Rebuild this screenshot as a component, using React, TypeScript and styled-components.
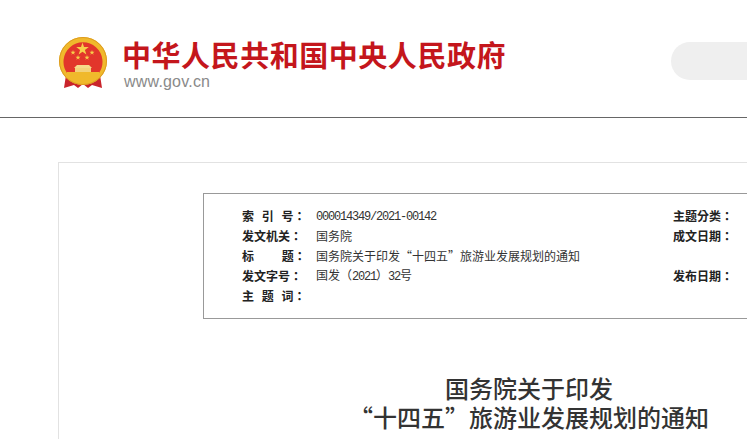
import React from "react";
import styled, { createGlobalStyle } from "styled-components";

const Global = createGlobalStyle`
  html, body { margin: 0; padding: 0; background: #fff; overflow: hidden; }
  body { font-family: "Noto Sans CJK SC", "Liberation Sans", sans-serif; color: #333; }
  #root { width: 747px; height: 439px; overflow: hidden; }
`;

const Page = styled.div`
  width: 747px;
  height: 439px;
  overflow: hidden;
`;

const Header = styled.header`
  height: 118px;
  box-sizing: border-box;
  border-bottom: 1px solid #666;
  margin-bottom: 44px;
  padding: 37px 0 0 58px;
  display: flex;
  justify-content: space-between;
  align-items: flex-start;
`;

const Brand = styled.div`
  display: flex;
  gap: 14px;
`;

const BrandText = styled.div`
  display: flex;
  flex-direction: column;
`;

const SiteName = styled.div`
  font-size: 29px;
  line-height: 35px;
  font-weight: 700;
  letter-spacing: 0.54px;
  color: #c4161c;
  white-space: nowrap;
`;

const SiteUrl = styled.div`
  margin: 1px 0 0 2px;
  font-family: "Liberation Sans", sans-serif;
  font-size: 16px;
  line-height: 18px;
  letter-spacing: 0.2px;
  color: #8a8a8a;
`;

const SearchPill = styled.div`
  width: 76px;
  height: 38px;
  margin-top: 5px;
  flex: none;
  background: #efefef;
  border-radius: 19px 0 0 19px;
`;

const Card = styled.main`
  width: 944px;
  height: 300px;
  margin-left: 58px;
  box-sizing: border-box;
  border: 1px solid #e2e2e2;
  padding: 30px 144px 0;
`;

const InfoBox = styled.section`
  width: 654px;
  height: 126px;
  box-sizing: border-box;
  border: 1px solid #999;
  padding: 12px 0 0 38px;
  display: grid;
  grid-template-columns: 431px 1fr;
  grid-auto-rows: 20px;
`;

const Field = styled.div`
  display: flex;
  align-items: center;
  font-size: 12px;
  line-height: 20px;
  white-space: nowrap;
`;

const Label = styled.span<{ $wide?: boolean }>`
  font-family: "Noto Sans CJK TC", "Noto Sans CJK SC", sans-serif;
  font-weight: 700;
  color: #222;
  white-space: pre;
  word-spacing: ${(p) => (p.$wide ? "25px" : "5px")};
  width: 74px;
  flex: none;
`;

const Value = styled.span`
  color: #333;
`;

const Latin = styled.span`
  font-family: "Liberation Mono", monospace;
  letter-spacing: -1.2px;
`;

const Title = styled.h1`
  margin: 54px 0 0 -1px;
  width: 654px;
  text-align: center;
  font-family: "Noto Sans CJK SC", "Liberation Serif", serif;
  font-size: 24px;
  line-height: 29px;
  font-weight: 500;
  color: #333;
  white-space: nowrap;
`;

const Emblem = () => (
  <svg width="50" height="54" viewBox="0 0 50 54" aria-hidden="true">
    <path d="M8 38 L6 51 L16 48 L20 51 L25 47 L30 51 L34 48 L44 51 L42 38 Z" fill="#c9242b" />
    <circle cx="25" cy="24" r="24" fill="#f0b92c" />
    <circle cx="25" cy="24" r="23.5" fill="none" stroke="#dd9c20" strokeWidth="1" />
    <path d="M9 36 A19.5 19.5 0 1 1 41 36 Z" fill="#e2362b" />
    <path d="M24.5 5.5l1.5 4.6h4.8l-3.9 2.8 1.5 4.6-3.9-2.8-3.9 2.8 1.5-4.6-3.9-2.8h4.8z" fill="#f7d04a" />
    <path d="M15 13l.6 1.8h1.9l-1.5 1.1.6 1.8-1.6-1.1-1.6 1.1.6-1.8-1.5-1.1h1.9z" fill="#f7d04a" />
    <path d="M34 13l.6 1.8h1.9l-1.5 1.1.6 1.8-1.6-1.1-1.6 1.1.6-1.8-1.5-1.1h1.9z" fill="#f7d04a" />
    <path d="M20 18l.6 1.8h1.9l-1.5 1.1.6 1.8-1.6-1.1-1.6 1.1.6-1.8-1.5-1.1h1.9z" fill="#f7d04a" />
    <path d="M29 18l.6 1.8h1.9l-1.5 1.1.6 1.8-1.6-1.1-1.6 1.1.6-1.8-1.5-1.1h1.9z" fill="#f7d04a" />
    <path d="M19 28h12l3 3H16z" fill="#f6d98a" />
    <rect x="17" y="31" width="16" height="5" fill="#f3d27a" />
    <rect x="9" y="35" width="32" height="2" fill="#f0b92c" />
    <path d="M8 38c4-2 7 3 11 1s4-2 6-2 2 0 6 2 7-3 11-1l-1 3c-5 2-8-1-11 2h-10c-3-3-6 0-11-2z" fill="#f0b92c" />
    <circle cx="25" cy="42" r="2.2" fill="none" stroke="#f0b92c" strokeWidth="1.2" />
  </svg>
);

export default function App() {
  return (
    <Page>
      <Global />
      <Header>
        <Brand>
          <Emblem />
          <BrandText>
            <SiteName>中华人民共和国中央人民政府</SiteName>
            <SiteUrl>www.gov.cn</SiteUrl>
          </BrandText>
        </Brand>
        <SearchPill />
      </Header>
      <Card>
        <InfoBox>
          <Field>
            <Label>索 引 号：</Label>
            <Value><Latin>000014349/2021-00142</Latin></Value>
          </Field>
          <Field><Label>主题分类：</Label></Field>
          <Field>
            <Label>发文机关：</Label>
            <Value>国务院</Value>
          </Field>
          <Field><Label>成文日期：</Label></Field>
          <Field>
            <Label $wide>标 题：</Label>
            <Value>国务院关于印发“十四五”旅游业发展规划的通知</Value>
          </Field>
          <Field />
          <Field>
            <Label>发文字号：</Label>
            <Value>国发（<Latin>2021</Latin>）<Latin>32</Latin>号</Value>
          </Field>
          <Field><Label>发布日期：</Label></Field>
          <Field>
            <Label>主 题 词：</Label>
          </Field>
        </InfoBox>
        <Title>
          国务院关于印发
          <br />
          “十四五”旅游业发展规划的通知
        </Title>
      </Card>
    </Page>
  );
}
